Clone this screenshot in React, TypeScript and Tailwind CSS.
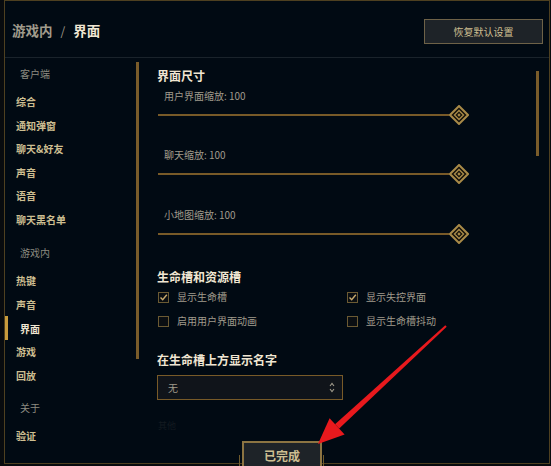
import React from "react";

const Thumb = () => (
  <svg width="20" height="20" viewBox="0 0 20 20" className="block">
    <polygon points="10,1 19,10 10,19 1,10" fill="#14110a" stroke="#a88a48" strokeWidth="2" />
    <polygon points="10,5.5 14.5,10 10,14.5 5.5,10" fill="none" stroke="#a88a48" strokeWidth="1.4" />
    <polygon points="10,8.3 11.7,10 10,11.7 8.3,10" fill="#a88a48" />
  </svg>
);

const Slider = ({ label, mt }: { label: string; mt: string }) => (
  <div className={mt}>
    <div className="h-[14px] leading-[14px] pl-[7px] text-[10px] text-[#a09b8c]">{label}</div>
    <div className="mt-[2px] h-[20px] flex items-center ml-[1px]">
      <div className="w-[291px] h-[2px] bg-[#785a28]" />
      <Thumb />
    </div>
  </div>
);

const Check = ({ checked, label }: { checked: boolean; label: string }) => (
  <div className="flex items-center gap-[8px]">
    <div className="w-[11px] h-[11px] border border-[#6b5a33] bg-[#0a0e12] flex items-center justify-center">
      {checked && (
        <svg width="9" height="9" viewBox="0 0 9 9">
          <path d="M1.5 4.5 L3.7 6.8 L7.8 1.8" fill="none" stroke="#c8aa6e" strokeWidth="1.4" />
        </svg>
      )}
    </div>
    <span className="text-[10px] leading-[16px] text-[#a09b8c]">{label}</span>
  </div>
);

const NavItem = ({ text, cls }: { text: string; cls?: string }) => (
  <div className={`h-[23.6px] leading-[23.6px] pl-[11px] text-[10px] font-bold text-[#cdbe91] ${cls ?? ""}`}>{text}</div>
);

const Section = ({ text, cls }: { text: string; cls: string }) => (
  <div className={`h-[24px] leading-[24px] pl-[15px] text-[10px] text-[#8c8a80] ${cls}`}>{text}</div>
);

export default function App() {
  return (
    <div className="relative w-[551px] h-[466px] overflow-hidden bg-[#080b0e] font-['Noto_Sans_CJK_SC','Noto_Sans',sans-serif]">
      <div className="ml-[4px] w-[546px] h-[464px] bg-[#010a13] border border-[#4e4020]">
        {/* header */}
        <div className="h-[57px] pt-[3px] flex items-center justify-between pl-[7px] pr-[6px] border-b border-[#1a232b]">
          <div className="flex items-center gap-[8px] text-[13.5px] font-bold">
            <span className="text-[#a09b8c]">游戏内</span>
            <span className="text-[#a09b8c] font-normal text-[12px]">/</span>
            <span className="text-[#f0e6d2]">界面</span>
          </div>
          <div className="mt-[1px] w-[119px] h-[25px] border border-[#6e6248] bg-[#1e2328] flex items-center justify-center text-[10px] text-[#cdbe91]">
            恢复默认设置
          </div>
        </div>
        {/* body */}
        <div className="flex h-[405px]">
          {/* sidebar */}
          <div className="w-[131px] flex flex-col pt-[4px]">
            <Section text="客户端" cls="" />
            <NavItem text="综合" cls="mt-[4px]" />
            <NavItem text="通知弹窗" />
            <NavItem text="聊天&好友" />
            <NavItem text="声音" />
            <NavItem text="语音" />
            <NavItem text="聊天黑名单" />
            <Section text="游戏内" cls="mt-[9.4px]" />
            <NavItem text="热键" cls="mt-[4.2px]" />
            <NavItem text="声音" />
            <div className="h-[23.6px] flex items-center">
              <div className="w-[3px] h-[24px] bg-[#c89b3c]" />
              <span className="pl-[12px] text-[10px] font-bold text-[#f0e6d2]">界面</span>
            </div>
            <NavItem text="游戏" />
            <NavItem text="回放" />
            <Section text="关于" cls="mt-[8.8px]" />
            <NavItem text="验证" cls="mt-[4.2px] text-[#857b62]" />
          </div>
          <div className="w-[3px] mt-[4px] h-[297px] bg-[#7a5c2a]" />
          {/* content */}
          <div className="w-[397px] pl-[18px] pt-[10px] flex flex-col">
            <div className="h-[16px] leading-[16px] text-[12px] font-bold text-[#f0e6d2]">界面尺寸</div>
            <Slider label="用户界面缩放: 100" mt="mt-[5px]" />
            <Slider label="聊天缩放: 100" mt="mt-[23px]" />
            <Slider label="小地图缩放: 100" mt="mt-[24px]" />
            <div className="mt-[25px] h-[16px] leading-[16px] text-[12px] font-bold text-[#f0e6d2]">生命槽和资源槽</div>
            <div className="mt-[4px] grid grid-cols-[189px_1fr] gap-y-[8px] pl-[1px]">
              <Check checked label="显示生命槽" />
              <Check checked label="显示失控界面" />
              <Check checked={false} label="启用用户界面动画" />
              <Check checked={false} label="显示生命槽抖动" />
            </div>
            <div className="mt-[23px] h-[16px] leading-[16px] text-[12px] font-bold text-[#f0e6d2]">在生命槽上方显示名字</div>
            <div className="mt-[7px] w-[186px] h-[25px] border border-[#785a28] bg-[#10141a] flex items-center justify-between pl-[10px] pr-[7px]">
              <span className="text-[10px] text-[#a09b8c]">无</span>
              <svg width="6" height="11" viewBox="0 0 6 11">
                <path d="M1 4 L3 1.5 L5 4" fill="none" stroke="#a09b8c" strokeWidth="1.1" />
                <path d="M1 7 L3 9.5 L5 7" fill="none" stroke="#a09b8c" strokeWidth="1.1" />
              </svg>
            </div>
            <div className="mt-[20px] h-[12px] leading-[12px] pl-[1px] text-[9px] text-[#141a20]">其他</div>
          </div>
          <div className="w-[3px] mt-[13px] h-[85px] bg-[#7a5c2a]" />
        </div>
      </div>
      {/* done button */}
      <div className="absolute left-[239px] top-[455px] w-[1px] h-[11px] bg-[#6e5a2c]" />
      <div className="absolute left-[323px] top-[455px] w-[1px] h-[11px] bg-[#6e5a2c]" />
      <div className="absolute left-[242px] top-[441px] w-[80px] h-[27px] border-2 border-[#8c7442] bg-[#1e2328] flex items-start justify-center pt-[4px]">
        <span className="text-[12px] font-bold text-[#cdbe91]">已完成</span>
      </div>
      {/* red arrow */}
      <svg className="absolute left-0 top-0" width="551" height="466" viewBox="0 0 551 466">
        <polygon
          points="446.7,326.7 445.3,325.3 335.0,424.2 339.2,428.6"
          fill="#e8191d"
        />
        <polygon points="318,444 344.6,434.5 329.6,418.3" fill="#e8191d" />
      </svg>
    </div>
  );
}
